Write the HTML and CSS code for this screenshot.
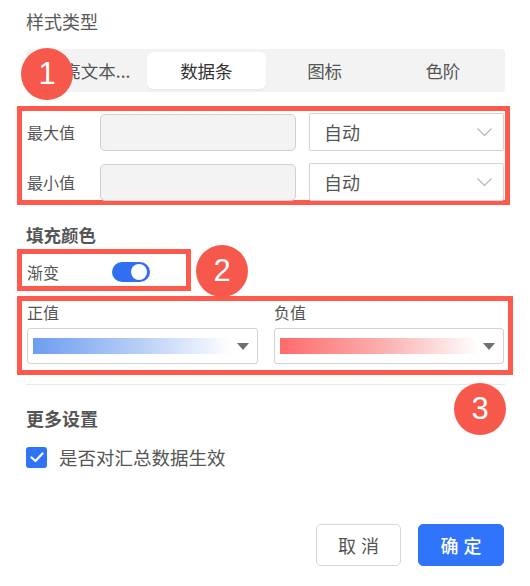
FILE: index.html
```html
<!DOCTYPE html>
<html lang="zh">
<head>
<meta charset="utf-8">
<link rel="stylesheet" href="styles.css">
</head>
<body>
<div class="panel">
  <div class="title">样式类型</div>
  <div class="tabs">
    <div class="tab">高亮文本...</div>
    <div class="tab active">数据条</div>
    <div class="tab">图标</div>
    <div class="tab">色阶</div>
  </div>

  <div class="mark-box box-range">
    <div class="range-row">
      <div class="label">最大值</div>
      <div class="input"></div>
      <div class="select"><span>自动</span>
        <svg class="chev" width="15" height="9" viewBox="0 0 15 9"><polyline points="0.5,0.5 7.5,7.5 14.5,0.5" fill="none" stroke="#b5b5b5" stroke-width="1.1"/></svg>
      </div>
    </div>
    <div class="range-row">
      <div class="label">最小值</div>
      <div class="input"></div>
      <div class="select"><span>自动</span>
        <svg class="chev" width="15" height="9" viewBox="0 0 15 9"><polyline points="0.5,0.5 7.5,7.5 14.5,0.5" fill="none" stroke="#b5b5b5" stroke-width="1.1"/></svg>
      </div>
    </div>
  </div>

  <div class="section-title fill-title">填充颜色</div>

  <div class="mark-box box-toggle">
    <div class="label">渐变</div>
    <div class="toggle"><div class="knob"></div></div>
  </div>

  <div class="mark-box box-colors">
    <div class="color-col">
      <div class="label">正值</div>
      <div class="color-select">
        <div class="bar bar-pos"></div>
        <svg class="tri" width="12" height="7" viewBox="0 0 12 7"><polygon points="0,0 12,0 6,7" fill="#6e7077"/></svg>
      </div>
    </div>
    <div class="color-col">
      <div class="label">负值</div>
      <div class="color-select">
        <div class="bar bar-neg"></div>
        <svg class="tri" width="12" height="7" viewBox="0 0 12 7"><polygon points="0,0 12,0 6,7" fill="#6e7077"/></svg>
      </div>
    </div>
  </div>

  <div class="divider"></div>

  <div class="section-title more-title">更多设置</div>
  <div class="check-row">
    <div class="checkbox">
      <svg width="14" height="11" viewBox="0 0 14 11"><polyline points="1.5,5.5 5.5,9 12.5,1.5" fill="none" stroke="#fff" stroke-width="2.2" stroke-linecap="round" stroke-linejoin="round"/></svg>
    </div>
    <span class="check-text">是否对汇总数据生效</span>
  </div>

  <div class="actions">
    <button class="btn btn-cancel">取消</button>
    <button class="btn btn-ok">确定</button>
  </div>

  <div class="badge badge-1">1</div>
  <div class="badge badge-2">2</div>
  <div class="badge badge-3">3</div>
</div>
</body>
</html>
```

FILE: styles.css
```css
* { box-sizing: border-box; }
html, body { margin: 0; padding: 0; background: #fff; }
body {
  font-family: "Noto Sans CJK SC", "Noto Sans", sans-serif;
  color: #555;
}
.panel {
  position: relative;
  width: 530px;
  height: 586px;
  padding: 9px 25px 0 26px;
}
.title {
  font-size: 18px;
  line-height: 24px;
  color: #595959;
}
.tabs {
  margin-top: 16px;
  height: 43px;
  background: #f3f3f3;
  border-radius: 4px;
  padding: 3px;
  display: grid;
  grid-template-columns: repeat(4, 1fr);
}
.tab {
  display: flex;
  align-items: center;
  justify-content: center;
  font-size: 17.5px;
  color: #555;
  white-space: nowrap;
  overflow: hidden;
}
.tab.active {
  background: #fff;
  border-radius: 6px;
  color: #333;
  box-shadow: 0 1px 2px rgba(0,0,0,0.06);
}
.mark-box {
  border: 5px solid #fd5a4d;
  margin-left: -9px;
}
.box-range {
  margin-top: 14px;
  margin-right: -5px;
  padding: 2px 1px 0 5px;
  display: flex;
  flex-direction: column;
  gap: 13px;
  height: 99px;
}
.range-row {
  display: grid;
  grid-template-columns: 60px 196px 195px;
  column-gap: 13px;
  height: 37px;
  align-items: center;
}
.label {
  font-size: 16px;
  color: #555;
  line-height: 22px;
  white-space: nowrap;
}
.input {
  height: 37px;
  background: #f3f3f3;
  border: 1px solid #d0d0d0;
  border-radius: 5px;
}
.select {
  height: 38px;
  border: 1px solid #d3d3d3;
  border-radius: 2px;
  display: flex;
  align-items: center;
  justify-content: space-between;
  padding: 0 11px 0 14px;
  font-size: 18px;
  color: #555;
}
.chev { display: block; margin-top: 1px; }
.section-title {
  font-size: 17.5px;
  font-weight: 600;
  color: #555;
}
.fill-title {
  margin-top: 18px;
  line-height: 24px;
}
.box-toggle {
  margin-top: 2px;
  width: 174px;
  height: 42px;
  display: flex;
  align-items: center;
  padding: 4px 0 0 5px;
}
.toggle {
  margin-left: 53px;
  width: 38px;
  height: 20px;
  border-radius: 10px;
  background: #2f6ff0;
  position: relative;
}
.knob {
  position: absolute;
  right: 3px;
  top: 2px;
  width: 16px;
  height: 16px;
  border-radius: 50%;
  background: #fff;
}
.box-colors {
  margin-top: 5px;
  margin-right: -8px;
  height: 79px;
  padding: 0 4px 0 5px;
  display: grid;
  grid-template-columns: 231px 230px;
  column-gap: 16px;
}
.color-col .label { line-height: 22px; }
.color-select {
  margin-top: 5px;
  height: 36px;
  border: 1px solid #d3d3d3;
  border-radius: 3px;
  display: flex;
  align-items: center;
  padding: 0 8px 0 5px;
}
.bar {
  flex: 0 0 199px;
  height: 16px;
}
.bar-pos { background: linear-gradient(to right, #6d9df0, #b9d0f6 55%, #ffffff); }
.bar-neg { background: linear-gradient(to right, #ff6a6a, #fcb4b4 55%, #ffffff); }
.tri { margin-left: auto; display: block; }
.divider {
  margin-top: 9px;
  height: 1px;
  background: #e9e9e9;
}
.more-title {
  margin-top: 20px;
  line-height: 26px;
  font-size: 18px;
}
.check-row {
  margin-top: 15px;
  display: flex;
  align-items: center;
  height: 22px;
}
.checkbox {
  width: 21px;
  height: 21px;
  border-radius: 3px;
  background: #2f73f6;
  display: flex;
  align-items: center;
  justify-content: center;
}
.check-text {
  margin-left: 12px;
  font-size: 18.5px;
  color: #555;
}
.actions {
  margin-top: 56px;
  margin-right: 1px;
  display: flex;
  justify-content: flex-end;
  gap: 17px;
}
.btn {
  height: 42px;
  border-radius: 5px;
  font-family: "Noto Sans CJK SC", sans-serif;
  font-size: 18px;
  letter-spacing: 5px;
  padding: 0 0 0 5px;
  cursor: pointer;
}
.btn-cancel {
  width: 85px;
  background: #fff;
  border: 1px solid #d6d6d6;
  color: #555;
}
.btn-ok {
  width: 86px;
  background: #2f74fb;
  border: 1px solid #2f74fb;
  color: #fff;
  font-weight: 500;
}
.badge {
  position: absolute;
  width: 52px;
  height: 52px;
  border-radius: 50%;
  background: #f6584b;
  color: #fff;
  font-family: "Liberation Sans", Arial, sans-serif;
  font-size: 31px;
  line-height: 52px;
  text-align: center;
}
.badge-1 { left: 21px; top: 48px; }
.badge-2 { left: 196px; top: 245px; }
.badge-3 { left: 454px; top: 383px; }
```
